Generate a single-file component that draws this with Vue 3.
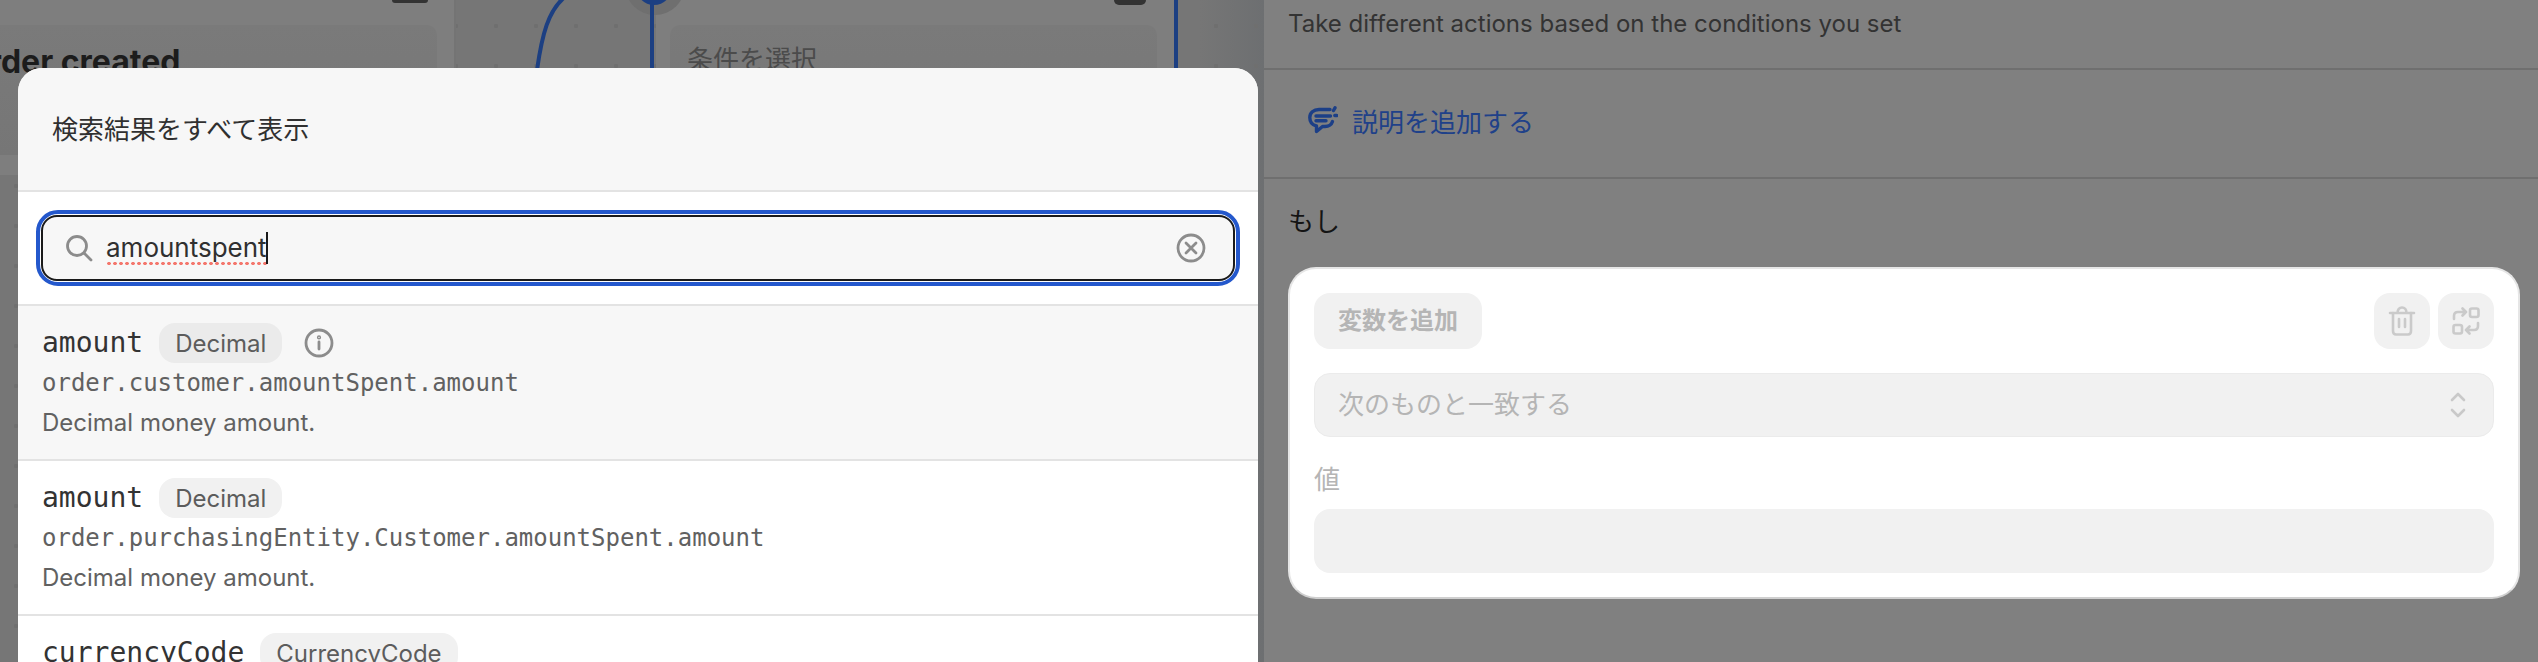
<script setup>
const rows = [
  { name: 'amount', type: 'Decimal', path: 'order.customer.amountSpent.amount', desc: 'Decimal money amount.', active: true },
  { name: 'amount', type: 'Decimal', path: 'order.purchasingEntity.Customer.amountSpent.amount', desc: 'Decimal money amount.', active: false },
  { name: 'currencyCode', type: 'CurrencyCode', path: 'order.customer.amountSpent.currencyCode', desc: 'Currency of the money.', active: false }
]
</script>

<template>
  <div class="page">
    <div class="canvas">
      <div class="node node-a">
        <div class="tab tab-a"></div>
        <div class="node-card card-a">
          <span class="node-title">Order created</span>
        </div>
      </div>
      <div class="node node-b">
        <div class="tab tab-b"></div>
        <div class="node-card card-b">
          <span class="node-hint">条件を選択</span>
        </div>
      </div>
      <svg class="wires" width="1264" height="120" viewBox="0 0 1264 120">
        <circle cx="655" cy="-15" r="30" fill="#6f6f6f" />
        <circle cx="654" cy="-13" r="18" fill="#1c3f82" />
        <path d="M652 0V120M1176 0V120M566 -4C548 10 542 35 537 70V120" fill="none" stroke="#1c3f82" stroke-width="4" />
      </svg>
    </div>

    <aside class="panel">
      <p class="lead">Take different actions based on the conditions you set</p>
      <div class="note">
        <svg class="note-icon" width="30" height="28" viewBox="0 0 30 28" fill="none" stroke="#1c3f87" stroke-width="3.4" stroke-linecap="round" stroke-linejoin="round">
          <path d="M22 3.5H11C5.5 3.5 1.8 7 1.8 11.5C1.8 16 4.6 19 8.5 20V25.5L14.5 20.5H17C20.5 20.5 23.5 18.5 24.5 15.5" />
          <path d="M8 10H22.5M8 14.8H18" />
          <path d="M25.5 4.5L27 1.8M26.8 9.5H28.6" />
        </svg>
        <span>説明を追加する</span>
      </div>
      <div class="cond">
        <div class="cond-label">もし</div>
        <div class="cond-card">
          <div class="toolbar">
            <div class="btn">変数を追加</div>
            <div class="tools">
              <div class="btn-icon">
                <svg width="28" height="30" viewBox="0 0 28 30" fill="none" stroke="#cacaca" stroke-width="2.6" stroke-linecap="round" stroke-linejoin="round">
                  <path d="M2 7H26M9.5 7C9.5 3.5 11.5 1.5 14 1.5C16.5 1.5 18.5 3.5 18.5 7" />
                  <path d="M5 7V25C5 27 6.2 28.5 8.2 28.5H19.8C21.8 28.5 23 27 23 25V7" />
                  <path d="M11 13V21M17 13V21" />
                </svg>
              </div>
              <div class="btn-icon">
                <svg width="28" height="28" viewBox="0 0 28 28" fill="none" stroke="#cacaca" stroke-width="2.6" stroke-linecap="round" stroke-linejoin="round">
                  <rect x="18" y="1.5" width="8.5" height="8.5" rx="2" />
                  <rect x="1.5" y="18" width="8.5" height="8.5" rx="2" />
                  <path d="M2 12V9C2 6.6 3.6 5 6 5H14M10.5 1.5L14 5L10.5 8.5" />
                  <path d="M26 16V19C26 21.4 24.4 23 22 23H14M17.5 19.5L14 23L17.5 26.5" />
                </svg>
              </div>
            </div>
          </div>
          <div class="select">
            <span>次のものと一致する</span>
            <svg width="16" height="26" viewBox="0 0 16 26" fill="none" stroke="#c9c9c9" stroke-width="2.6" stroke-linecap="round" stroke-linejoin="round">
              <path d="M2 8L8 2L14 8M2 18L8 24L14 18" />
            </svg>
          </div>
          <div class="field-label">値</div>
          <div class="value"></div>
        </div>
      </div>
    </aside>

    <div class="modal">
      <header class="modal-head">検索結果をすべて表示</header>
      <div class="search-wrap">
        <div class="search-ring">
          <div class="search">
            <svg width="28" height="28" viewBox="0 0 28 28" fill="none" stroke="#8c8c8c" stroke-width="2.8" stroke-linecap="round">
              <circle cx="12" cy="12" r="9.5" />
              <path d="M19 19L26 26" />
            </svg>
            <span class="query">amountspent<i class="caret"></i></span>
            <svg class="clear" width="30" height="30" viewBox="0 0 30 30" fill="none" stroke="#8c8c8c" stroke-width="2.8" stroke-linecap="round">
              <circle cx="15" cy="15" r="13" />
              <path d="M10 10L20 20M20 10L10 20" />
            </svg>
          </div>
        </div>
      </div>
      <div v-for="(row, i) in rows" :key="i" class="row" :class="{ active: row.active }">
        <div class="row-top">
          <span class="row-name">{{ row.name }}</span>
          <span class="badge">{{ row.type }}</span>
          <svg v-if="row.active" class="info" width="30" height="30" viewBox="0 0 30 30" fill="none" stroke="#8c8c8c" stroke-width="2.8" stroke-linecap="round">
            <circle cx="15" cy="15" r="13" />
            <path d="M15 14V21" />
            <circle cx="15" cy="9.4" r="0.7" />
          </svg>
        </div>
        <div class="row-path">{{ row.path }}</div>
        <div class="row-desc">{{ row.desc }}</div>
      </div>
    </div>
  </div>
</template>

<style scoped>
.page {
  position: relative;
  display: flex;
  width: 2538px;
  height: 662px;
  overflow: hidden;
  font-family: Inter, "Noto Sans CJK JP", sans-serif;
  color: #303030;
  background: #808080;
}
.canvas {
  position: relative;
  flex: 0 0 1264px;
  height: 662px;
  overflow: hidden;
  background-color: #767676;
  background-image:
    radial-gradient(circle, #6f6f6f 2px, transparent 2.5px),
    linear-gradient(90deg, transparent 1200px, #6d6f71 1264px);
  background-size: 40px 40px, 100% 100%;
  background-position: -4px 6px, 0 0;
}
.node {
  position: absolute;
  top: 0;
  height: 175px;
  background: #7e7e7e;
}
.node-a {
  left: 0;
  width: 454px;
  border-right: 2px solid #747474;
}
.node-b {
  left: 656px;
  width: 520px;
}
.tab {
  position: absolute;
  top: 0;
  background: #333;
  border-radius: 0 0 6px 6px;
}
.tab-a {
  left: 392px;
  width: 36px;
  height: 3px;
}
.tab-b {
  left: 458px;
  width: 32px;
  height: 5px;
}
.node-card {
  position: absolute;
  top: 25px;
  height: 130px;
  border-radius: 10px;
  background: linear-gradient(#7a7a7a, #767676);
}
.card-a {
  left: -50px;
  width: 487px;
}
.card-b {
  left: 14px;
  width: 487px;
}
.node-title {
  position: absolute;
  left: 14px;
  top: 17px;
  font-size: 32px;
  line-height: 40px;
  font-weight: 700;
  white-space: nowrap;
  color: #1c1c1c;
}
.node-hint {
  position: absolute;
  left: 17px;
  top: 16px;
  font-size: 26px;
  line-height: 38px;
  color: #4b4b4b;
}
.wires {
  position: absolute;
  left: 0;
  top: 0;
  overflow: visible;
}
.panel {
  flex: 1;
  min-width: 0;
  display: flex;
  flex-direction: column;
}
.lead {
  box-sizing: border-box;
  height: 70px;
  margin: 0;
  padding: 9px 24px 0;
  font-size: 24px;
  line-height: 30px;
  color: #333;
  border-bottom: 2px solid #6f6f6f;
}
.note {
  display: flex;
  align-items: center;
  gap: 14px;
  box-sizing: content-box;
  height: 100px;
  padding: 0 0 7px 44px;
  font-size: 26px;
  color: #1f4189;
  border-bottom: 2px solid #6f6f6f;
}
.note-icon {
  flex: none;
}
.cond {
  padding: 0 18px 0 24px;
}
.cond-label {
  height: 88px;
  padding-top: 26px;
  box-sizing: border-box;
  font-size: 26px;
  line-height: 34px;
  color: #141414;
}
.cond-card {
  box-sizing: border-box;
  height: 332px;
  padding: 24px;
  background: #fff;
  border: 2px solid #e6e6e6;
  border-bottom-color: #cfcfcf;
  border-radius: 28px;
}
.toolbar {
  display: flex;
  justify-content: space-between;
}
.btn {
  display: flex;
  align-items: center;
  box-sizing: border-box;
  height: 56px;
  padding: 0 24px 5px;
  border-radius: 16px;
  background: #f1f1f1;
  color: #b5b5b5;
  font-size: 24px;
  font-weight: 600;
}
.tools {
  display: flex;
  gap: 8px;
}
.btn-icon {
  display: flex;
  align-items: center;
  justify-content: center;
  width: 56px;
  height: 56px;
  border-radius: 16px;
  background: #f1f1f1;
}
.select {
  display: flex;
  align-items: center;
  justify-content: space-between;
  height: 64px;
  margin-top: 24px;
  padding: 0 27px 0 23px;
  box-sizing: border-box;
  border: 1px solid #ebebeb;
  border-radius: 16px;
  background: #f1f1f1;
  color: #b5b5b5;
  font-size: 26px;
}
.select span {
  margin-bottom: 5px;
}
.field-label {
  height: 72px;
  padding-top: 26px;
  box-sizing: border-box;
  font-size: 26px;
  line-height: 34px;
  color: #b5b5b5;
}
.value {
  height: 64px;
  border-radius: 16px;
  background: #f1f1f1;
}
.modal {
  position: absolute;
  left: 18px;
  top: 68px;
  width: 1240px;
  height: 620px;
  border-radius: 24px 24px 0 0;
  overflow: hidden;
  background: #fff;
}
.modal-head {
  box-sizing: border-box;
  height: 124px;
  padding: 46px 34px 0;
  font-size: 26px;
  line-height: 32px;
  color: #303030;
  background: #f7f7f7;
  border-bottom: 2px solid #e3e3e3;
}
.search-wrap {
  box-sizing: border-box;
  height: 114px;
  padding: 18px 18px 0;
  border-bottom: 2px solid #e3e3e3;
}
.search-ring {
  box-sizing: border-box;
  height: 76px;
  padding: 1px;
  border: 4px solid #2458cc;
  border-radius: 22px;
}
.search {
  display: flex;
  align-items: center;
  box-sizing: border-box;
  height: 100%;
  padding: 0 27px 0 22px;
  border: 2px solid #1a1a1a;
  border-radius: 16px;
  background: #f7f7f7;
}
.query {
  position: relative;
  margin: 3px 0 0 13px;
  padding-bottom: 3px;
  font-size: 26px;
  line-height: 28px;
  color: #303030;
  background: radial-gradient(circle, #f4776d 1.5px, transparent 2px) left bottom / 6px 3px repeat-x;
}
.caret {
  position: absolute;
  right: -1px;
  top: -2px;
  width: 2px;
  height: 32px;
  background: #1a1a1a;
}
.clear {
  margin-left: auto;
}
.row {
  box-sizing: border-box;
  height: 155px;
  padding: 17px 24px 0;
  border-bottom: 2px solid #e3e3e3;
  background: #fff;
}
.row.active {
  background: #f7f7f7;
}
.row-top {
  display: flex;
  align-items: center;
  gap: 16px;
  height: 40px;
}
.row-name {
  margin-top: -2px;
  font-family: "DejaVu Sans Mono", monospace;
  font-size: 28px;
  color: #333;
}
.badge {
  display: flex;
  align-items: center;
  height: 40px;
  padding: 0 16px;
  border-radius: 16px;
  background: #f1f1f1;
  font-size: 24px;
  color: #5c5c5c;
}
.row.active .badge {
  background: #ebebeb;
}
.info {
  margin-left: 6px;
}
.row-path {
  font-family: "DejaVu Sans Mono", monospace;
  font-size: 24px;
  line-height: 40px;
  color: #616161;
}
.row-desc {
  font-size: 24px;
  line-height: 40px;
  color: #616161;
}
</style>
